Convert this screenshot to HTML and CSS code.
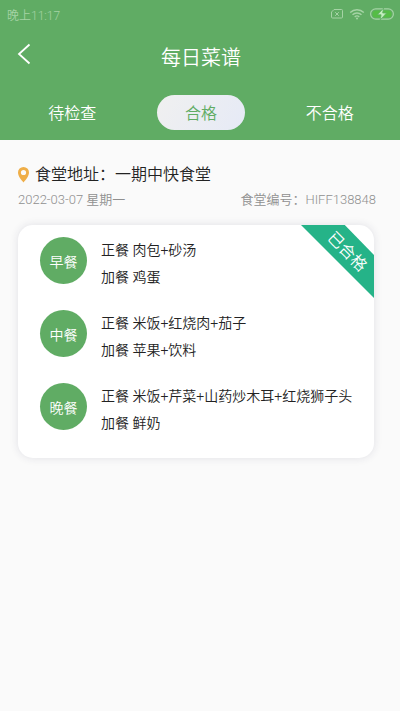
FILE: index.html
```html
<!DOCTYPE html>
<html lang="zh-CN">
<head>
<meta charset="utf-8">
<meta name="viewport" content="width=device-width, initial-scale=1">
<title>每日菜谱</title>
<link rel="stylesheet" href="styles.css">
</head>
<body>
<header class="header">
  <div class="status">
    <span>晚上11:17</span>
    <span class="status-icons">
      <svg width="14" height="12" viewBox="0 0 14 12" fill="none" stroke="currentColor" aria-hidden="true">
        <path d="M4 1.500h7.500a1 1 0 0 1 1 1v6.500a1 1 0 0 1-1 1h-9a1 1 0 0 1-1-1V4z"/>
        <path d="M5.200 4.200l3.600 3.600M8.800 4.200L5.200 7.800"/>
      </svg>
      <svg width="16" height="12" viewBox="0 0 16 12" fill="none" stroke="currentColor" stroke-width="1.400" aria-hidden="true">
        <path d="M1.200 4.500a9.600 9.600 0 0 1 13.600 0M3.500 6.800a6.400 6.400 0 0 1 9 0M5.700 9a3.300 3.300 0 0 1 4.600 0"/>
        <circle cx="8" cy="10.500" r="1" fill="currentColor" stroke="none"/>
      </svg>
      <svg width="24" height="12" viewBox="0 0 24 12" aria-hidden="true">
        <rect x=".6" y=".9" width="22.800" height="10.200" rx="5.100" fill="#60ac64" stroke="currentColor" stroke-width="1.200"/>
        <rect x="2.500" y="2.400" width="19" height="7.200" rx="3.600" fill="#55bd45"/>
        <path d="M13.600 0L7.500 6.800h3.600L10.200 12l6.300-7h-3.800z" fill="#c3efbd" stroke="#60ac64" stroke-width=".8"/>
      </svg>
    </span>
  </div>
  <div class="titlebar">
    <button class="back" type="button" aria-label="返回">
      <svg width="14" height="22" viewBox="0 0 14 22" fill="none" stroke="currentColor" stroke-width="1.800" aria-hidden="true"><path d="M12.500 1.500L2 11l10.500 9.500"/></svg>
    </button>
    <h1 class="title">每日菜谱</h1>
  </div>
  <nav class="tabs">
    <button class="tab" type="button">待检查</button>
    <button class="tab tab-active" type="button" aria-current="true">合格</button>
    <button class="tab" type="button">不合格</button>
  </nav>
</header>
<main class="content">
  <h2 class="place">
    <svg width="11" height="16" viewBox="0 0 11 16" aria-hidden="true"><path fill="#efae48" fill-rule="evenodd" d="M5.500 0A5.500 5.500 0 0 0 0 5.500C0 9 3 12.500 5.500 15.500 8 12.500 11 9 11 5.500A5.500 5.500 0 0 0 5.500 0zm0 2.900a2.600 2.600 0 1 1 0 5.200 2.600 2.600 0 0 1 0-5.200z"/></svg>
    <span>食堂地址：一期中快食堂</span>
  </h2>
  <div class="meta">
    <span>2022-03-07 星期一</span>
    <span>食堂编号：HIFF138848</span>
  </div>
  <section class="card">
    <div class="ribbon"><span class="ribbon-text">已合格</span></div>
    <div class="meal">
      <div class="badge">早餐</div>
      <div class="dishes"><p>正餐 肉包+砂汤</p><p>加餐 鸡蛋</p></div>
    </div>
    <div class="meal">
      <div class="badge">中餐</div>
      <div class="dishes"><p>正餐 米饭+红烧肉+茄子</p><p>加餐 苹果+饮料</p></div>
    </div>
    <div class="meal">
      <div class="badge">晚餐</div>
      <div class="dishes"><p>正餐 米饭+芹菜+山药炒木耳+红烧狮子头</p><p>加餐 鲜奶</p></div>
    </div>
  </section>
</main>
</body>
</html>
```
FILE: styles.css
```css
* { box-sizing: border-box; }

body {
  margin: 0;
  background: #fafafa;
  color: #222;
  font-family: Roboto, "Noto Sans CJK SC", sans-serif;
  font-weight: 350;
}

h1, h2, p { margin: 0; font-weight: inherit; }

button {
  border: 0;
  padding: 0;
  background: none;
  color: inherit;
  font: inherit;
}

.header {
  background: #60ac64;
  color: #fff;
}

.status {
  display: flex;
  align-items: center;
  justify-content: space-between;
  height: 28px;
  padding: 0 6px 0 7px;
  color: #a5d3a5;
  font-size: 12px;
}

.status-icons {
  display: flex;
  align-items: center;
  gap: 5px;
}

.titlebar {
  display: grid;
  grid-template-columns: 48px 1fr 46px;
  align-items: center;
  height: 56px;
}

.back {
  display: flex;
  align-items: center;
  height: 100%;
  padding: 0 0 4px 17px;
}

.title {
  padding-top: 3px;
  font-size: 20px;
  line-height: 28px;
  text-align: center;
}

.tabs {
  display: grid;
  grid-template-columns: repeat(3, 1fr);
  justify-items: center;
  align-items: center;
  height: 56px;
  padding: 0 6px 0 8px;
}

.tab {
  width: 88px;
  height: 35px;
  border-radius: 18px;
  font-size: 16px;
}

.tab-active {
  background: linear-gradient(120deg, #f0f0f0, #e6eaf6);
  color: #60ac64;
}

.content { padding: 23px 26px 24px 18px; }

.place {
  display: flex;
  align-items: center;
  gap: 6px;
  font-size: 16px;
  line-height: 24px;
}

.meta {
  display: flex;
  justify-content: space-between;
  margin-right: -2px;
  color: #909090;
  font-size: 13px;
  line-height: 26px;
}

.card {
  position: relative;
  display: flex;
  flex-direction: column;
  gap: 19px;
  margin-top: 12px;
  padding: 12px 8px 21px 22px;
  border-radius: 15px;
  background: #fff;
  box-shadow: 0 0 8px rgba(40, 40, 80, 0.12);
}

.ribbon {
  position: absolute;
  top: 0;
  right: 0;
  display: flex;
  align-items: center;
  justify-content: center;
  width: 73px;
  height: 73px;
  padding: 0 0 20px 20px;
  background: #25b388;
  clip-path: polygon(0 0, 60% 0, 100% 41%, 100% 100%);
}

.ribbon-text {
  color: #fff;
  font-size: 16px;
  line-height: 20px;
  white-space: nowrap;
  transform: rotate(45deg);
}

.meal {
  display: flex;
  align-items: flex-start;
  gap: 14px;
}

.badge {
  display: flex;
  flex: none;
  align-items: center;
  justify-content: center;
  width: 47px;
  height: 47px;
  border-radius: 50%;
  background: #60ac64;
  color: #fff;
  font-size: 14px;
}

.dishes {
  font-size: 14px;
  line-height: 27px;
}
```
